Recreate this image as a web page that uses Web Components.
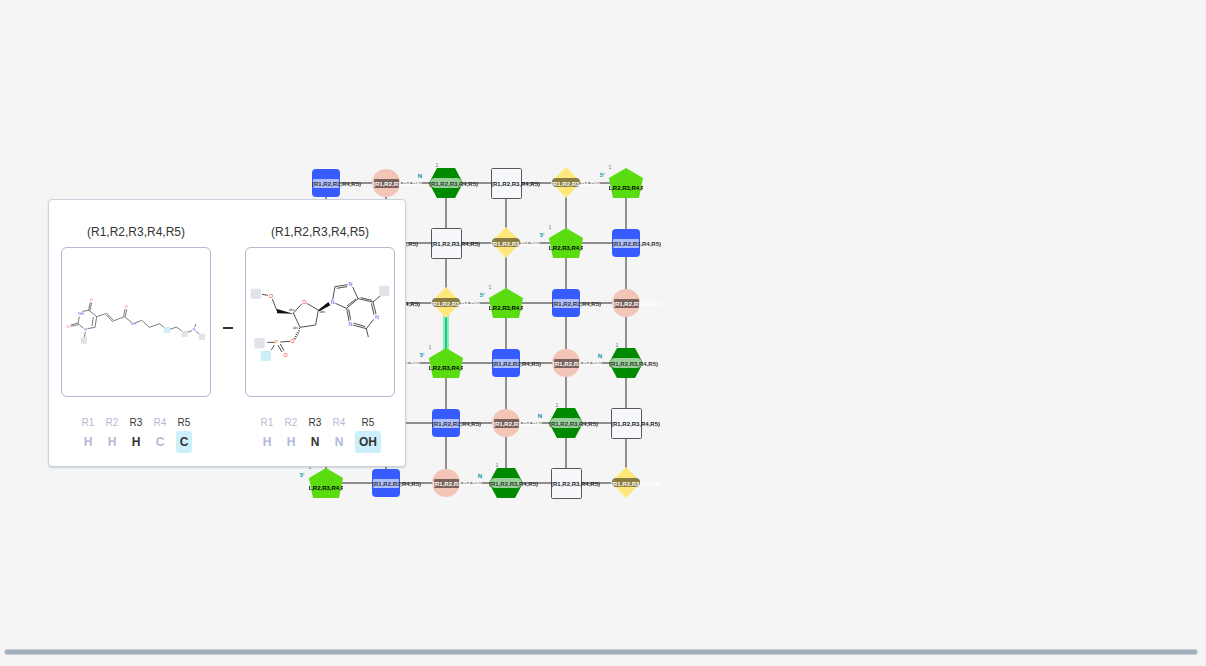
<!DOCTYPE html>
<html lang="en">
<head>
<meta charset="utf-8">
<title>Monomer canvas</title>
<style>
  body { margin: 0; background: #f5f5f5; font-family: "Liberation Sans", Arial, sans-serif; color: #333; }
</style>
</head>
<body>
<sequence-editor></sequence-editor>

<template id="editor-template">
  <style>
    :host { display: flex; flex-direction: column; min-height: 100vh; }
    main { position: relative; flex: 1; display: flex; }
    monomer-canvas { flex: 1; }
    bond-preview { position: absolute; left: 48px; top: 199px; }
    .scroll { height: 4px; margin: 0 8px 11px 4px; border: 1px solid #c9ced4; border-radius: 3px; background: #a3afba; }
  </style>
  <main>
    <monomer-canvas></monomer-canvas>
    <bond-preview>
      <monomer-card slot="first" label="(R1,R2,R3,R4,R5)" groups="H,H,H,C,C" used="3,5" connected="5">
        <svg viewBox="18 -96 444 444" role="img" aria-label="First monomer structure">
          <g fill="none" stroke="#666" stroke-width="2.6">
            <path d="M79 94L99 91L122 110L117 142L94 146M82 144L66 131L70 110M112 111L108 138M98 90L103 67M102 91L107 68M66 129L44 135M67 134L45 139M88 156L85 172M122 110L152 100L174 122M151 105L171 126M174 122L205 110L226 126M203 109L207 87M208 110L212 88M239 128L257 121L280 142L311 131L327 145M341 148L362 141L378 154M394 157L408 152M416 142L419 132M420 154L431 163"/>
          </g>
          <g fill="#e1e3e8"><rect x="74" y="172" width="19" height="19" rx="2"/><rect x="376" y="152" width="19" height="19" rx="2"/><rect x="428" y="161" width="19" height="19" rx="2"/></g>
          <rect x="323" y="141" width="19" height="19" rx="2" fill="#cdeffb"/>
          <g font-size="12" text-anchor="middle" fill="#f44848"><text x="106" y="63">O</text><text x="37" y="144">O</text><text x="211" y="84">O</text></g>
          <g font-size="12" text-anchor="middle" fill="#5a62ee"><text x="75" y="105">NH</text><text x="88" y="153">N</text><text x="232" y="135">NH</text><text x="414" y="153">N</text></g>
        </svg>
      </monomer-card>
      <monomer-card slot="second" label="(R1,R2,R3,R4,R5)" groups="H,H,N,N,OH" used="3,5" connected="5">
        <svg viewBox="18 -66 444 444" role="img" aria-label="Second monomer structure">
          <g fill="none" stroke="#333" stroke-width="2.6">
            <path d="M66 73L84 76M97 87L111 123M160 129L185 102M200 100L235 120L227 165L180 172L160 129M278 89L285 50L323 44M290 55L321 50M338 51L354 86L320 115L286 100M348 87L321 108M354 86L399 96L408 132M362 83L396 91M394 100L402 134M401 148L379 176L339 165M376 170L341 159M327 153L320 115M332 149L326 118M379 176L385 201M399 96L420 78M82 217L103 217M121 216L150 214M103 225L94 240M114 226L126 246M121 222L132 242"/>
            <path d="M180 174L177 177M174 181L180 184M170 187L177 190M167 192L174 196M164 198L171 202M161 204L168 208"/>
          </g>
          <path fill="#111" d="M160 131L111 117L111 130ZM235 120L265 96L271 106L238 124Z"/>
          <g fill="#e1e3e8"><rect x="32" y="56" width="31" height="31" rx="5"/><rect x="417" y="47" width="31" height="31" rx="5"/><rect x="43" y="204" width="31" height="31" rx="5"/></g>
          <rect x="62" y="242" width="31" height="31" rx="5" fill="#cdeffb"/>
          <g font-size="16" text-anchor="middle" fill="#f43434"><text x="93" y="83">O</text><text x="192" y="102">O</text><text x="158" y="218">O</text><text x="137" y="260">O</text></g>
          <g font-size="16" text-anchor="middle" fill="#4048ee"><text x="277" y="102">N</text><text x="331" y="48">N</text><text x="411" y="147">N</text><text x="331" y="168">N</text></g>
          <text x="109" y="222" font-size="16" text-anchor="middle" fill="#f09030">P</text>
          <g font-size="10" text-anchor="middle" fill="#333"><text x="155" y="122">abs</text><text x="247" y="129">abs</text><text x="167" y="177">abs</text></g>
        </svg>
      </monomer-card>
    </bond-preview>
  </main>
  <div class="scroll"></div>
</template>

<template id="preview-template">
  <style>
    :host { display: block; }
    section { box-sizing: border-box; display: flex; gap: 10px; align-items: center; padding: 23px 10px 13px 12px; border: 1px solid #c8d2dc; border-radius: 4px; background: #fff; box-shadow: 0 1px 2px rgba(90, 110, 130, .25); }
    .bond { width: 10px; height: 2px; margin: 104px 2px 0; background: #333; align-self: flex-start; }
  </style>
  <section>
    <slot name="first"></slot>
    <span class="bond"></span>
    <slot name="second"></slot>
  </section>
</template>

<template id="card-template">
  <style>
    :host { display: flex; flex-direction: column; align-items: center; width: 150px; }
    h2 { margin: 0 0 6px; font-size: 12px; line-height: 18px; font-weight: 400; color: #333; }
    .frame { box-sizing: border-box; width: 150px; height: 150px; border: 1px solid #b4b9d6; border-radius: 6px; overflow: hidden; }
    ::slotted(svg) { display: block; width: 100%; height: 100%; }
    .groups { display: flex; gap: 8px; margin-top: 18px; }
    .group { display: flex; flex-direction: column; align-items: center; color: #b4b9d6; }
    .used { color: #333; }
    .name { font-size: 10px; line-height: 16px; width: 16px; text-align: center; }
    .atom { box-sizing: border-box; min-width: 16px; height: 22px; font-size: 12px; line-height: 22px; font-weight: 700; text-align: center; border-radius: 3px; }
    .wide { width: 26px; }
    .connected { background: #cdeffb; }
  </style>
  <h2></h2>
  <div class="frame"><slot></slot></div>
  <div class="groups"></div>
</template>

<template id="canvas-template">
  <style>
    :host { display: flex; min-height: 520px; }
    svg { flex: 1; width: 100%; font-family: "Liberation Sans", Arial, sans-serif; }
    .link { stroke: #8f8f8f; stroke-width: 2; }
    .halo { stroke: #86f2b4; stroke-width: 6; }
    .active { stroke: #20c488; stroke-width: 2; }
    .label { font-size: 6px; font-weight: 700; }
    .end { font-size: 6px; font-weight: 700; fill: #0097a8; text-anchor: middle; }
    .index { font-size: 6px; fill: #888; text-anchor: middle; }
  </style>
  <svg role="img" aria-label="Monomers on the canvas">
    <defs><clipPath id="pentagon-label"><rect x="-17" y="0" width="34" height="10"/></clipPath></defs>
  </svg>
</template>

<script>
  const stamp = (host, id) => {
    const root = host.attachShadow({ mode: 'open' });
    root.append(document.getElementById(id).content.cloneNode(true));
    return root;
  };

  const NAME = '(R1,R2,R3,R4,R5)';
  const SHAPES = [
    { // CHEM block
      body: '<rect x="-14" y="-14" width="28" height="28" rx="4" fill="#365cff"/><rect x="-13" y="-4" width="26" height="9" rx="1" fill="#fff" fill-opacity=".6"/>',
      x: -14, ink: '#333' },
    { // phosphate
      body: '<circle r="14" fill="#f3c5b7"/><rect x="-12" y="-4" width="25" height="9" rx="1" fill="#000" fill-opacity=".5"/>',
      x: -13, ink: '#fff' },
    { // peptide
      body: '<path d="M-17 0L-9 -15H9L17 0L9 15H-9Z" fill="#008a00"/><rect x="-16" y="-5" width="32" height="10" rx="5" fill="#fff" fill-opacity=".6"/>',
      x: -17, ink: '#333', end: 'N', endX: -26, endY: -5, indexX: -9, indexY: -16 },
    { // unsplit block
      body: '<rect x="-14.5" y="-14.5" width="30" height="30" rx="1" fill="#f7f8fb" stroke="#585858"/>',
      x: -15, ink: '#222' },
    { // base
      body: '<path d="M0 -16L15 -1L0 15L-15 -1Z" fill="#ffe77b"/><rect x="-14" y="-5" width="28" height="9" rx="4" fill="#000" fill-opacity=".46"/>',
      x: -15, ink: '#fff' },
    { // sugar
      body: '<path d="M0 -15L17 -5L13 15H-13L-17 -5Z" fill="#5adc11"/>',
      x: 0, ink: '#000', clipped: true, end: "5'", endX: -24, endY: -6, indexX: -16, indexY: -14 },
  ];

  // Lattice cells, one string per row: x is a monomer, o a monomer without chain-end marks.
  const CELLS = ['xxxxxx', '.oxxxx', '.xxxxx', '.xxxxx', '..xxxx', 'xxxxxx'];

  customElements.define('monomer-canvas', class extends HTMLElement {
    constructor() {
      super();
      const svg = stamp(this, 'canvas-template').querySelector('svg');
      const at = i => 60 * i;
      let art = '<g transform="translate(326 183)">';
      for (let i = 0; i < 6; i++) {
        art += `<path class="link" d="M0 ${at(i)}H300M${at(i)} 0V300"/>`;
      }
      art += '<path class="halo" d="M120 120V180"/><path class="active" d="M120 120V180"/>';
      CELLS.forEach((cells, row) => [...cells].forEach((cell, col) => {
        if (cell === '.') return;
        const s = SHAPES[(row + col) % 6];
        art += `<g transform="translate(${at(col)} ${at(row)})">${s.body}`;
        art += s.clipped
          ? `<g clip-path="url(#pentagon-label)"><text class="label" y="7" text-anchor="middle">${NAME}</text></g>`
          : `<text class="label" x="${s.x}" y="3" fill="${s.ink}">${NAME}</text>`;
        if (s.end && cell === 'x') {
          art += `<text class="end" x="${s.endX}" y="${s.endY}">${s.end}</text>`;
          art += `<text class="index" x="${s.indexX}" y="${s.indexY}">1</text>`;
        }
        art += '</g>';
      }));
      svg.insertAdjacentHTML('beforeend', art + '</g>');
    }
  });

  customElements.define('monomer-card', class extends HTMLElement {
    connectedCallback() {
      if (this.shadowRoot) return;
      const root = stamp(this, 'card-template');
      root.querySelector('h2').textContent = this.getAttribute('label');
      const used = this.getAttribute('used').split(',');
      const connected = this.getAttribute('connected');
      root.querySelector('.groups').innerHTML = this.getAttribute('groups').split(',').map((atom, i) => {
        const n = String(i + 1);
        return `<div class="group ${used.includes(n) ? 'used' : ''}"><span class="name">R${n}</span>` +
          `<span class="atom ${atom.length > 1 ? 'wide' : ''} ${connected === n ? 'connected' : ''}">${atom}</span></div>`;
      }).join('');
    }
  });

  customElements.define('bond-preview', class extends HTMLElement {
    constructor() { super(); stamp(this, 'preview-template'); }
  });

  customElements.define('sequence-editor', class extends HTMLElement {
    constructor() { super(); stamp(this, 'editor-template'); }
  });
</script>
</body>
</html>
